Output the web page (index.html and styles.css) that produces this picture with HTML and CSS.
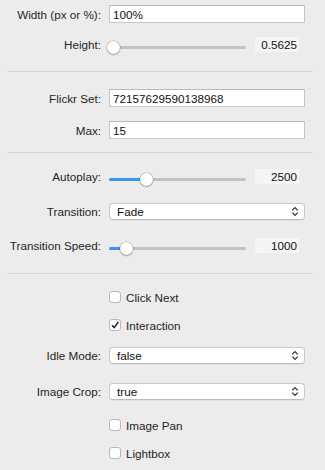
FILE: index.html
```html
<!DOCTYPE html>
<html lang="en">
<head>
    <meta charset="UTF-8">
    <meta name="viewport" content="width=device-width, initial-scale=1.0">
    <title>Flickr Slideshow Options</title>
    <link rel="stylesheet" href="styles.css">
</head>
<body>
<div class="panel">
    <div class="section first">
        <div class="row">
            <label class="label" for="width">Width (px or %):</label>
            <input class="text-input" type="text" id="width" value="100%">
        </div>
        <div class="row">
            <span class="label">Height:</span>
            <div class="slider">
                <div class="track"><div class="fill" style="width: 4px"></div></div>
                <div class="thumb" style="left: 4.5px"></div>
            </div>
            <span class="value">0.5625</span>
        </div>
    </div>

    <div class="section second">
        <div class="row">
            <label class="label" for="flickr_set">Flickr Set:</label>
            <input class="text-input" type="text" id="flickr_set" value="72157629590138968">
        </div>
        <div class="row">
            <label class="label" for="max">Max:</label>
            <input class="text-input" type="text" id="max" value="15">
        </div>
    </div>

    <div class="section third">
        <div class="row">
            <span class="label">Autoplay:</span>
            <div class="slider">
                <div class="track"><div class="fill" style="width: 37px"></div></div>
                <div class="thumb" style="left: 37px"></div>
            </div>
            <span class="value">2500</span>
        </div>
        <div class="row row-select">
            <span class="label">Transition:</span>
            <div class="select">
                <span>Fade</span>
                <svg width="7" height="10" viewBox="0 0 7 10"><path d="M1 4 L3.5 1.5 L6 4 M1 6 L3.5 8.5 L6 6" fill="none" stroke="#333" stroke-width="1.2"/></svg>
            </div>
        </div>
        <div class="row after-select">
            <span class="label">Transition Speed:</span>
            <div class="slider">
                <div class="track"><div class="fill" style="width: 17px"></div></div>
                <div class="thumb" style="left: 17px"></div>
            </div>
            <span class="value">1000</span>
        </div>
    </div>

    <div class="section fourth">
        <div class="row row-check">
            <span class="label"></span>
            <span class="box"></span>
            <span class="check-text">Click Next</span>
        </div>
        <div class="row row-check">
            <span class="label"></span>
            <span class="box"><svg width="10" height="10" viewBox="0 0 10 10"><path d="M2 5.2 L4.2 7.6 L8.3 2" fill="none" stroke="#222" stroke-width="1.5"/></svg></span>
            <span class="check-text">Interaction</span>
        </div>
        <div class="row row-select near">
            <span class="label">Idle Mode:</span>
            <div class="select">
                <span>false</span>
                <svg width="7" height="10" viewBox="0 0 7 10"><path d="M1 4 L3.5 1.5 L6 4 M1 6 L3.5 8.5 L6 6" fill="none" stroke="#333" stroke-width="1.2"/></svg>
            </div>
        </div>
        <div class="row row-select">
            <span class="label">Image Crop:</span>
            <div class="select">
                <span>true</span>
                <svg width="7" height="10" viewBox="0 0 7 10"><path d="M1 4 L3.5 1.5 L6 4 M1 6 L3.5 8.5 L6 6" fill="none" stroke="#333" stroke-width="1.2"/></svg>
            </div>
        </div>
        <div class="row row-check after-select">
            <span class="label"></span>
            <span class="box"></span>
            <span class="check-text">Image Pan</span>
        </div>
        <div class="row row-check">
            <span class="label"></span>
            <span class="box"></span>
            <span class="check-text">Lightbox</span>
        </div>
    </div>
</div>
</body>
</html>
```

FILE: styles.css
```css
body {
    margin: 0;
    background-color: #ececec;
    font-family: "Liberation Sans", Arial, sans-serif;
    font-size: 11.7px;
    color: #262626;
}

.panel {
    width: 306px;
    margin-left: 7px;
}

.section {
    border-top: 1px solid #d6d6d6;
}

.section.first {
    border-top: none;
    padding: 5px 0 19px;
}

.section.second {
    padding: 17px 0 13px;
}

.section.third {
    padding: 16px 0 20px;
}

.section.fourth {
    padding: 16px 0 10px;
}

.row {
    display: flex;
    align-items: center;
    margin-top: 14px;
}

.row:first-child {
    margin-top: 0;
}

.row.row-select {
    margin-top: 19px;
}

.row.row-select.near {
    margin-top: 15px;
}

.row.after-select {
    margin-top: 18px;
}

.row.row-check {
    height: 14px;
}

.label {
    flex: none;
    width: 94px;
    margin-right: 8px;
    text-align: right;
}

.text-input {
    box-sizing: border-box;
    width: 196px;
    height: 18px;
    margin: 0;
    padding: 0 3px;
    border: 1px solid #c6c6c6;
    border-top-color: #b9b9b9;
    background-color: #fff;
    font: inherit;
    color: #111;
    outline: none;
}

.slider {
    position: relative;
    width: 137px;
    height: 15px;
}

.track {
    position: absolute;
    left: 0;
    right: 0;
    top: 9px;
    height: 3px;
    border-radius: 2px;
    background-color: #c2c2c2;
    overflow: hidden;
}

.fill {
    height: 100%;
    background-color: #3b95f7;
}

.thumb {
    position: absolute;
    top: 4px;
    width: 13px;
    height: 13px;
    margin-left: -6.5px;
    border-radius: 50%;
    background-color: #fff;
    box-shadow: 0 0 0 0.5px rgba(0, 0, 0, 0.25), 0 1px 1.5px rgba(0, 0, 0, 0.25);
}

.value {
    box-sizing: border-box;
    width: 44px;
    height: 15px;
    margin-left: 9px;
    padding-right: 2px;
    line-height: 15px;
    text-align: right;
    background-color: #f5f5f5;
    color: #111;
}

.select {
    box-sizing: border-box;
    display: flex;
    align-items: center;
    justify-content: space-between;
    width: 196px;
    height: 17px;
    padding: 0 5px 0 7px;
    border: 1px solid #c9c9c9;
    border-bottom-color: #bcbcbc;
    border-radius: 4px;
    background-color: #fff;
    box-shadow: 0 1px 0 rgba(0, 0, 0, 0.04);
    color: #111;
}

.select svg {
    width: 8px;
    height: 11px;
}

.box {
    box-sizing: border-box;
    display: flex;
    align-items: center;
    justify-content: center;
    width: 12px;
    height: 12px;
    border: 1px solid #b8b8b8;
    border-radius: 3px;
    background-color: #fff;
}

.check-text {
    margin-left: 5px;
}
```
